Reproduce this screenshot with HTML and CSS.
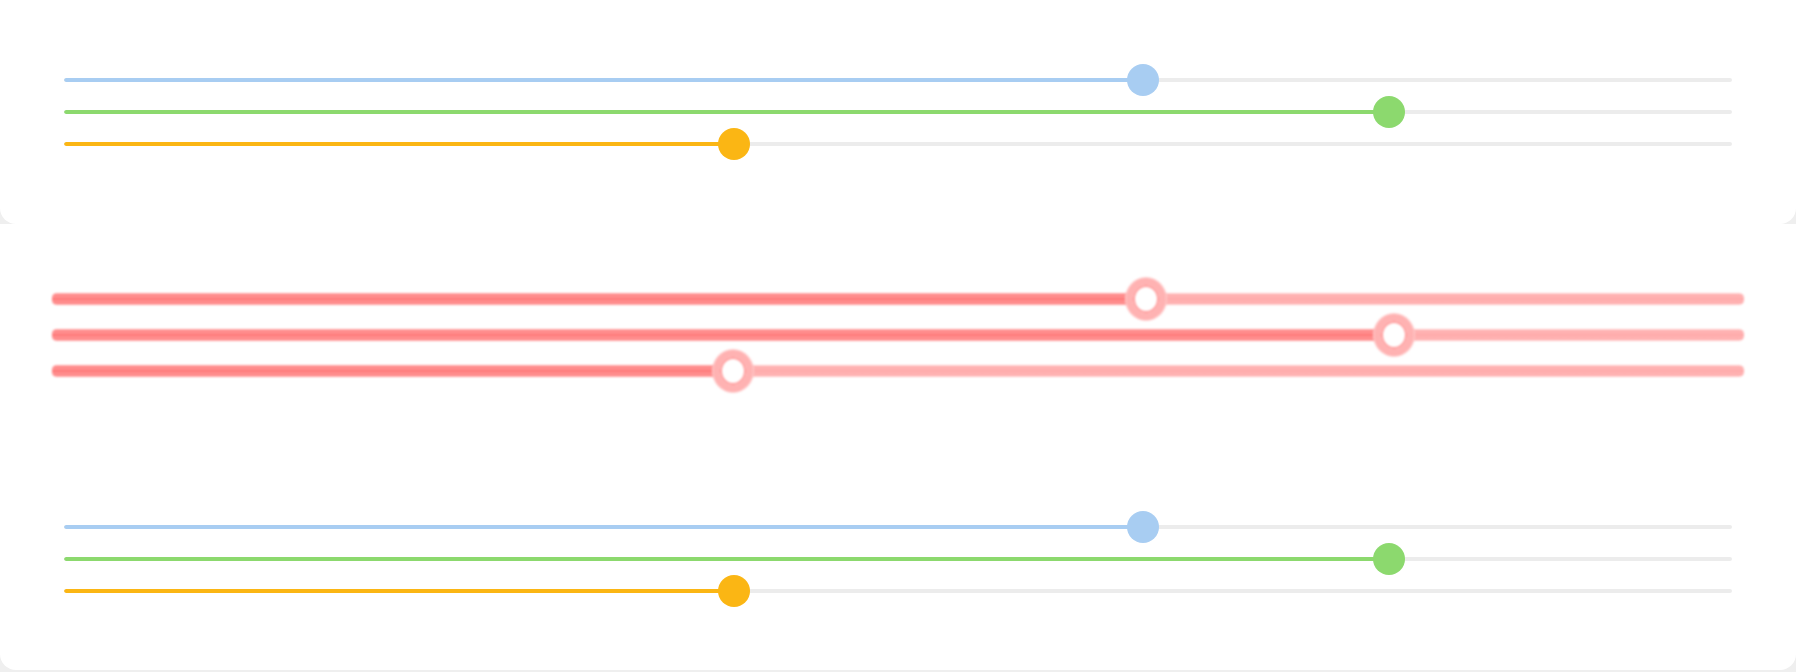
FILE: index.html
```html
<!DOCTYPE html>
<html>
<head>
<meta charset="utf-8">
<link rel="stylesheet" href="styles.css">
</head>
<body>
<div class="page">
  <section class="card card-top">
    <div class="row"><div class="slider blue" style="--v:0.65"><div class="track"><div class="fill"></div></div><div class="thumb"></div></div></div>
    <div class="row"><div class="slider green" style="--v:0.8"><div class="track"><div class="fill"></div></div><div class="thumb"></div></div></div>
    <div class="row"><div class="slider orange" style="--v:0.4"><div class="track"><div class="fill"></div></div><div class="thumb"></div></div></div>
  </section>
  <section class="card card-bottom">
    <div class="red-group">
      <div class="rrow"><div class="rslider" style="--v:0.65"><div class="rtrack"><div class="rfill"></div></div><div class="ring"></div></div></div>
      <div class="rrow"><div class="rslider" style="--v:0.8"><div class="rtrack"><div class="rfill"></div></div><div class="ring"></div></div></div>
      <div class="rrow"><div class="rslider" style="--v:0.4"><div class="rtrack"><div class="rfill"></div></div><div class="ring"></div></div></div>
    </div>
    <div class="group">
      <div class="row"><div class="slider blue" style="--v:0.65"><div class="track"><div class="fill"></div></div><div class="thumb"></div></div></div>
      <div class="row"><div class="slider green" style="--v:0.8"><div class="track"><div class="fill"></div></div><div class="thumb"></div></div></div>
      <div class="row"><div class="slider orange" style="--v:0.4"><div class="track"><div class="fill"></div></div><div class="thumb"></div></div></div>
    </div>
  </section>
</div>
</body>
</html>
```
FILE: styles.css
```css
* { box-sizing: border-box; }
html, body { margin: 0; padding: 0; }
body { background: #efefef; width: 1796px; height: 672px; overflow: hidden; font-family: "Liberation Sans", sans-serif; }
.page { display: flex; flex-direction: column; }
.card { background: #fff; border-radius: 0 0 16px 16px; }
.card-top { height: 224px; padding: 64px 64px 0; }
.card-bottom { height: 446px; padding: 57px 0 0; }
.group { margin-top: 122px; padding: 0 64px; }
.row { height: 32px; display: flex; align-items: center; }
.slider { position: relative; width: 100%; height: 4px; }
.track { height: 4px; border-radius: 2px; background: #ececec; overflow: hidden; }
.fill { height: 100%; width: calc(16px + var(--v) * (100% - 32px)); border-radius: 2px; }
.thumb { position: absolute; top: 50%; width: 32px; height: 32px; border-radius: 50%;
  left: calc(var(--v) * (100% - 32px)); transform: translateY(-50%); }
.blue .fill, .blue .thumb { background: #a8cdf2; }
.green .fill, .green .thumb { background: #8cd96e; }
.orange .fill, .orange .thumb { background: #fbb614; }

.red-group { padding: 0 52px 0 52px; }
.rrow { height: 36px; display: flex; align-items: center; }
.rslider { position: relative; width: 100%; height: 12px; }
.rtrack { height: 12px; border-radius: 5px; filter: blur(0.8px);
  background: linear-gradient(#ffd4d4 0, #ffa8a8 20%, #ffbcbc 40%, #ff9696 50%, #ffbcbc 60%, #ffa8a8 80%, #ffd4d4 100%); }
.rfill { height: 100%; border-radius: 5px; width: calc(19px + var(--v) * (100% - 38px));
  background: linear-gradient(#ffb0b0 0, #ff8080 20%, #ff9c9c 36%, #ff6262 50%, #ff9c9c 64%, #ff8080 80%, #ffb0b0 100%); }
.ring { position: absolute; top: 50%; width: 40px; height: 42px; border-radius: 50%;
  left: calc(var(--v) * (100% - 40px)); transform: translateY(-50%);
  background: #fff; border: 7px solid #ffb2b2; filter: blur(1px);
  box-shadow: 0 0 0 1px #ffd0d0, inset 0 0 0 2px #ff9c9c; }
```
